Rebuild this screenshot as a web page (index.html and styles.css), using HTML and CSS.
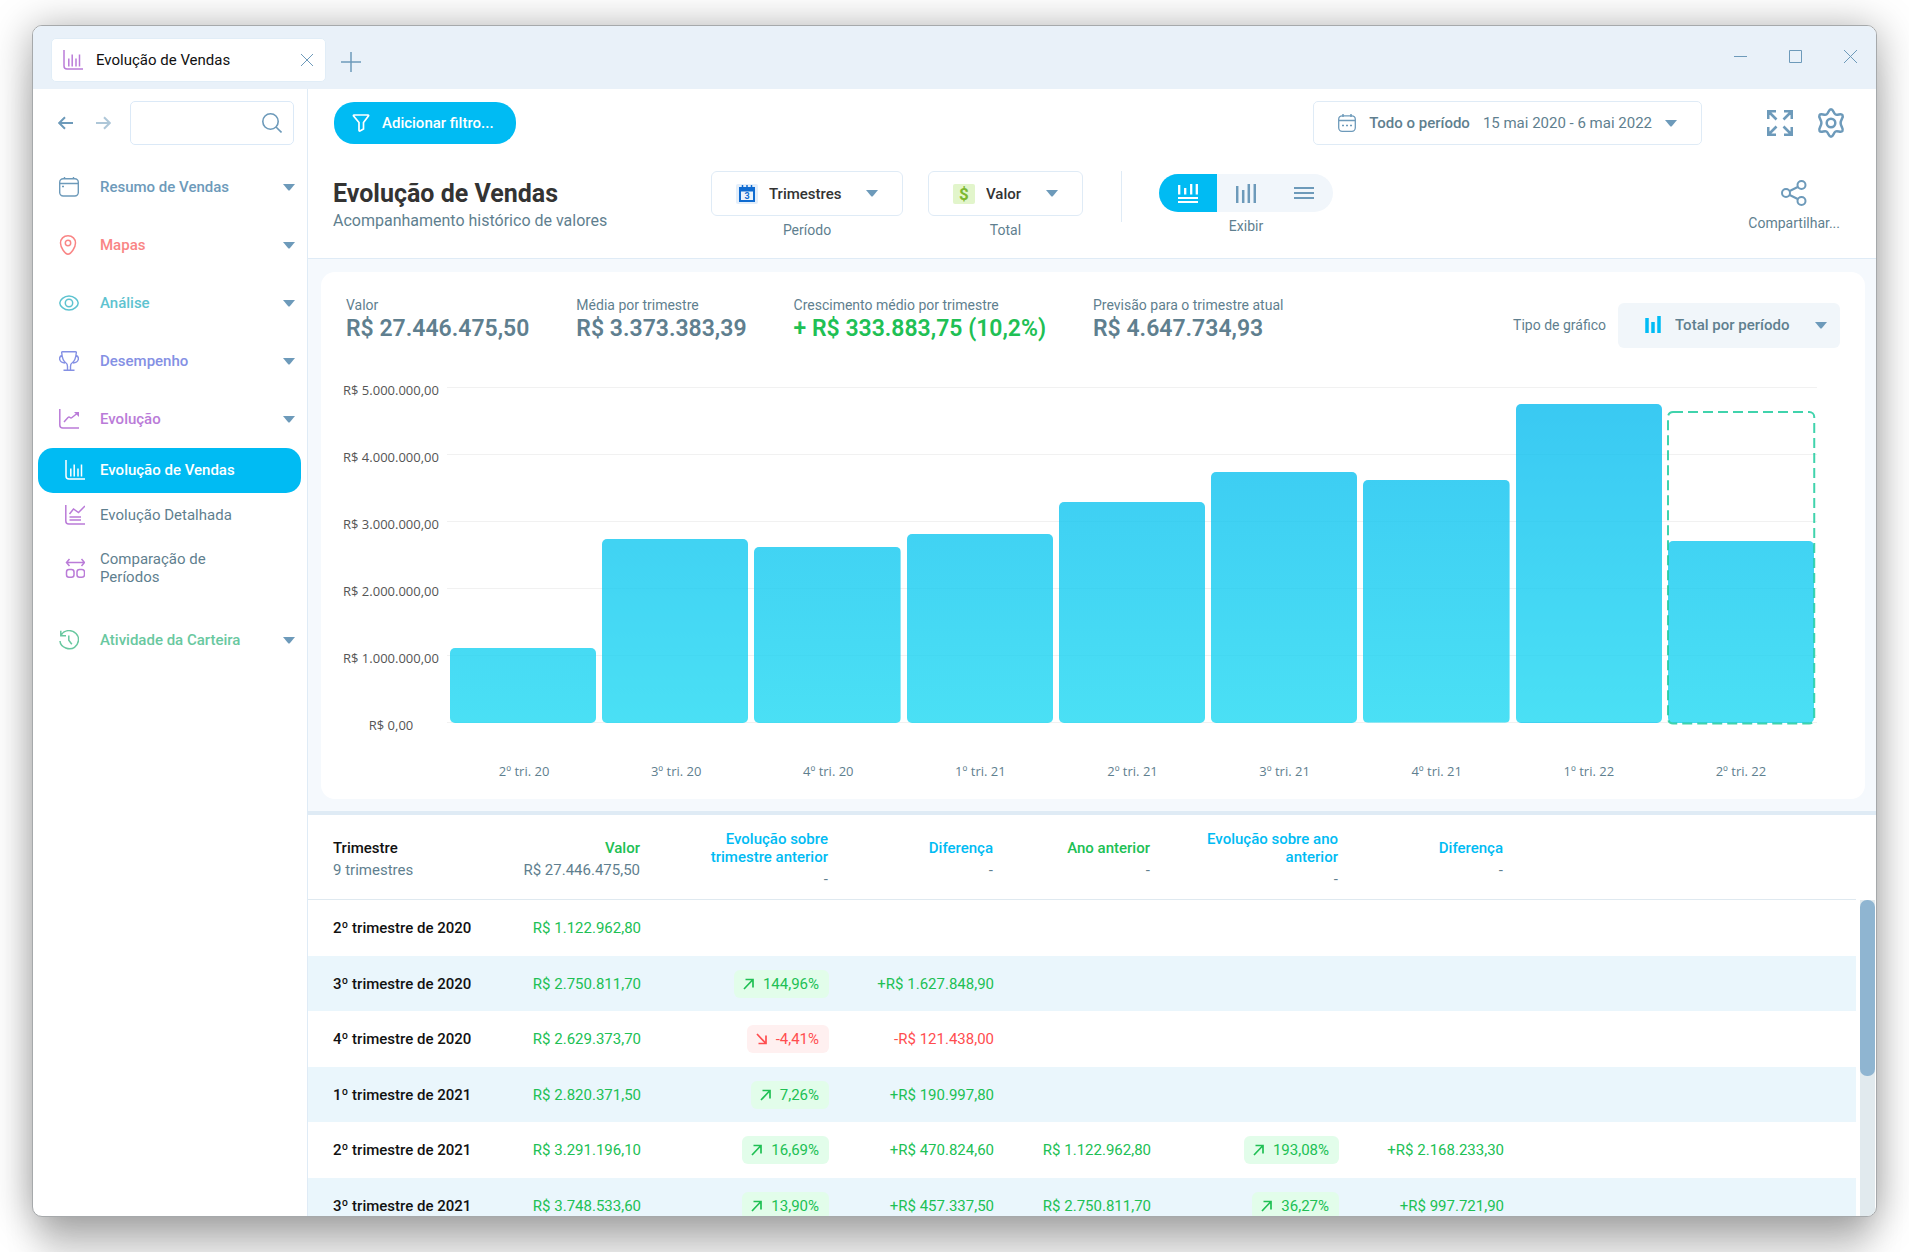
FILE: index.html
```html
<!DOCTYPE html>
<html lang="pt-BR">
<head>
<meta charset="utf-8">
<title>Evolução de Vendas</title>
<link rel="stylesheet" href="styles.css">
</head>
<body>
<svg class="symbols" aria-hidden="true">
  <symbol id="caret" viewBox="0 0 12 7"><path d="M0 0h12L7 6q-1 1-2 0z" fill="currentColor"/></symbol>
  <symbol id="bars" viewBox="0 0 20 20"><path d="M1 0v16q0 3 3 3h16" stroke-width="1.5"/><path d="M5.8 8.5v8M9.2 4.5v12M13 8.5v8M16.5 4.5v12" stroke-width="1.5"/></symbol>
  <symbol id="up" viewBox="0 0 11 12"><path d="M1 11l8.500-9M2.500 1.500h7.500v8" stroke-width="1.700"/></symbol>
  <symbol id="down" viewBox="0 0 11 12"><path d="M1 1l8.500 9M2.500 10.500h7.500v-8" stroke-width="1.700"/></symbol>
</svg>
<div class="window">
  <header class="titlebar">
    <div class="tab">
      <svg class="icon purple"><use href="#bars"/></svg>
      <span class="tab-title">Evolução de Vendas</span>
      <button class="plain" aria-label="Fechar aba"><svg class="icon-s" viewBox="0 0 12 12"><path d="M0 0l12 12M12 0L0 12" stroke-width="1"/></svg></button>
    </div>
    <button class="plain new-tab" aria-label="Nova aba"><svg class="icon" viewBox="0 0 20 20"><path d="M10 0v20M0 10h20" stroke-width="1.500"/></svg></button>
    <div class="controls">
      <button class="plain" aria-label="Minimizar"><svg class="icon-c" viewBox="0 0 13 13"><path d="M0 6.500h13" stroke-width="1"/></svg></button>
      <button class="plain" aria-label="Maximizar"><svg class="icon-c" viewBox="0 0 13 13"><path d="M.5.5h12v12h-12z" stroke-width="1"/></svg></button>
      <button class="plain" aria-label="Fechar"><svg class="icon-c" viewBox="0 0 13 13"><path d="M0 0l13 13M13 0L0 13" stroke-width="1"/></svg></button>
    </div>
  </header>
  <div class="body">
    <aside class="sidebar">
      <div class="tools">
        <button class="plain" aria-label="Voltar"><svg class="icon-a" viewBox="0 0 15 14"><path d="M15 7H1.500M7 1.200L1.200 7 7 12.800" stroke-width="2"/></svg></button>
        <button class="plain faded" aria-label="Avançar"><svg class="icon-a" viewBox="0 0 15 14"><path d="M0 7h13.500M8 1.200L13.800 7 8 12.800" stroke-width="2"/></svg></button>
        <label class="search">
          <input type="search" aria-label="Pesquisar">
          <svg class="icon" viewBox="0 0 20 20"><circle cx="8.500" cy="8.500" r="7.700" stroke-width="1.600"/><path d="M14 14l5.500 5.500" stroke-width="1.600"/></svg>
        </label>
      </div>
      <nav class="nav">
        <button class="group blue"><svg class="icon" viewBox="0 0 20 20"><rect x=".7" y="1.700" width="18.600" height="17.300" rx="3.500" stroke-width="1.400"/><path d="M1 6.500h18M5.500 0v2M14.500 0v2M3 9.500h2" stroke-width="1.400"/></svg><span>Resumo de Vendas</span><svg class="caret"><use href="#caret"/></svg></button>
        <button class="group red"><svg class="icon" viewBox="0 0 20 20"><path d="M9 .8c-4.500 0-7.500 3.200-7.500 7.200C1.500 12.500 6 19.200 9 19.200S16.500 12.500 16.500 8C16.500 4 13.500.8 9 .8z" stroke-width="1.500"/><circle cx="9" cy="8" r="2.700" stroke-width="1.500"/></svg><span>Mapas</span><svg class="caret"><use href="#caret"/></svg></button>
        <button class="group teal"><svg class="icon" viewBox="0 0 20 20"><path d="M.8 10C.8 7 5 3 10 3s9.200 4 9.200 7-4.200 7-9.200 7S.8 13 .8 10z" stroke-width="1.500"/><circle cx="10" cy="10" r="3.700" stroke-width="1.500"/></svg><span>Análise</span><svg class="caret"><use href="#caret"/></svg></button>
        <button class="group violet"><svg class="icon" viewBox="0 0 20 20"><path d="M3.500.8h13q1 0 .8 1c-.4 5-1.500 8.500-4.300 10.200-1.300.8-1.500 2-1.500 3.500v3M3.500.8q-1 0-.8 1c.4 5 1.500 8.500 4.300 10.200 1.300.8 1.500 2 1.500 3.500v3M2.800 4.500C-.6 6-.3 11.500 6 12M17.200 4.500C20.600 6 20.300 11.500 14 12M4.500 19.200h11" stroke-width="1.400"/></svg><span>Desempenho</span><svg class="caret"><use href="#caret"/></svg></button>
        <button class="group purple" aria-expanded="true"><svg class="icon" viewBox="0 0 20 20"><path d="M.8 0v16q0 3 3 3H20M5 13l4-4.500q1-.8 2 0t2 0L18 4.500" stroke-width="1.500"/><path d="M15 3h5v5z" fill="currentColor" stroke="none"/></svg><span>Evolução</span><svg class="caret"><use href="#caret"/></svg></button>
        <a class="item active" href="#vendas" aria-current="page"><svg class="icon"><use href="#bars"/></svg><span>Evolução de Vendas</span></a>
        <a class="item" href="#detalhada"><svg class="icon purple" viewBox="0 0 20 20"><path d="M.8 0v16q0 3 3 3H20M4.500 9l4-5 5 3.500L20 1M4.500 12H16M4.500 15H16" stroke-width="1.500"/></svg><span>Evolução Detalhada</span></a>
        <a class="item tall" href="#comparacao"><svg class="icon purple" viewBox="0 0 20 20"><rect x="1.500" y="11.500" width="7.500" height="7.700" rx="2.500" stroke-width="1.500"/><rect x="12" y="11.500" width="7.500" height="7.700" rx="2.500" stroke-width="1.500"/><path d="M2 4.500h17M4.500 1L1.500 4.500l3 3.500M16.500 1l3 3.500-3 3.500" stroke-width="1.500"/></svg><span>Comparação de Períodos</span></a>
        <button class="group green"><svg class="icon" viewBox="0 0 20 20"><path d="M2.500 4.500C6-.5 13-.5 17 3.500s3 10.500-1.500 13.800S1.500 18 1 11M1.800.8v5H7M9.800 5.500v4.800l3 4" stroke-width="1.500"/></svg><span>Atividade da Carteira</span><svg class="caret"><use href="#caret"/></svg></button>
      </nav>
    </aside>
    <main class="main">
      <div class="topbar">
        <button class="filter"><svg class="icon-f" viewBox="0 0 17 18"><path d="M1.500 1h14q1 0 .4 1L11 8.500v6.500L7.500 17q-1 .3-1-.8V8.500L1.100 2Q.6 1 1.500 1z" stroke-width="1.700"/></svg>Adicionar filtro...</button>
        <button class="period"><svg class="icon-f" viewBox="0 0 18 18"><rect x=".7" y="1.800" width="16.600" height="15.500" rx="3.500" stroke-width="1.300"/><path d="M1 6.500h16M5 0v3M13 0v3M4 11.500h2M8 11.500h2M12 11.500h2" stroke-width="1.500"/></svg><strong>Todo o período</strong><span>15 mai 2020 - 6 mai 2022</span><svg class="caret"><use href="#caret"/></svg></button>
        <button class="plain" aria-label="Tela cheia"><svg class="icon-l" viewBox="0 0 26 26"><path d="M1.200 9V1.200H9M17 1.200h7.800V9M24.800 17v7.800H17M9 24.800H1.200V17M2 2l7.500 7.500M24 2l-7.500 7.500M24 24l-7.500-7.500M2 24l7.500-7.500" stroke-width="2.600"/></svg></button>
        <button class="plain gear" aria-label="Configurações"><svg class="icon-g" viewBox="0 0 28 30"><path d="M14 1.300c2.500 0 2.300 4 4.500 5.200s5.600-1.800 7 .6-1.900 4.300-1.900 7.900 3.200 5.600 1.900 7.900-4.800-.6-7 .6-2 5.200-4.500 5.200-2.300-4-4.500-5.200-5.600 1.800-7-.6 1.900-4.300 1.900-7.900-3.200-5.600-1.900-7.900 4.800.6 7-.6 2-5.200 4.500-5.200z" stroke-width="2.500"/><circle cx="14" cy="15" r="4.300" stroke-width="2.500"/></svg></button>
      </div>
      <div class="heading">
        <div class="titles">
          <h1>Evolução de Vendas</h1>
          <p>Acompanhamento histórico de valores</p>
        </div>
        <div class="option">
          <div class="field wide">
            <svg class="icon-p" viewBox="0 0 22 20"><rect width="22" height="20" rx="2" fill="#e3eefa" stroke="none"/><path d="M3 3h16v15H3z" fill="#0f6bd0" stroke="none"/><path d="M5 7.500h12V16H5z" fill="#eaf3fc" stroke="none"/><path d="M6.500 1v3.500M11 1v3.500M15.500 1v3.500" stroke="#0f6bd0" stroke-width="1.500"/><text x="11" y="15" class="day">3</text></svg>
            <select id="periodo"><option>Trimestres</option><option>Meses</option></select>
            <svg class="caret"><use href="#caret"/></svg>
          </div>
          <label for="periodo">Período</label>
        </div>
        <div class="option">
          <div class="field">
            <svg class="icon-p" viewBox="0 0 22 20"><rect width="22" height="20" rx="2" fill="#e2f5cb" stroke="none"/><text x="11" y="16" class="money">$</text></svg>
            <select id="total"><option>Valor</option></select>
            <svg class="caret"><use href="#caret"/></svg>
          </div>
          <label for="total">Total</label>
        </div>
        <div class="option view">
          <div class="segments">
            <button class="on" aria-pressed="true" aria-label="Gráfico e tabela"><svg class="icon" viewBox="0 0 20 20"><path d="M1.200 2v9.500M7.200 5v6.500M13.200 1v10.500M18.800 1v10.500" stroke-width="2.300"/><path d="M0 15h20M0 19h20" stroke-width="1.900"/></svg></button>
            <button aria-label="Gráfico"><svg class="icon" viewBox="0 0 20 20"><path d="M1.200 3v17M7.200 7v13M12.800 1v19M18.800 1v19" stroke-width="2.500"/></svg></button>
            <button aria-label="Tabela"><svg class="icon" viewBox="0 0 20 20"><path d="M0 5h20M0 10h20M0 15h20" stroke-width="2"/></svg></button>
          </div>
          <span>Exibir</span>
        </div>
        <button class="share"><svg class="icon-l" viewBox="0 0 26 26"><circle cx="5" cy="13" r="4" stroke-width="2"/><circle cx="20.500" cy="5" r="4" stroke-width="2"/><circle cx="20.500" cy="21" r="4" stroke-width="2"/><path d="M8.700 11l8-4M8.700 15l8 4" stroke-width="2"/></svg>Compartilhar...</button>
      </div>
      <section class="stage">
        <div class="panel">
          <div class="summary">
            <dl>
              <div><dt>Valor</dt><dd>R$ 27.446.475,50</dd></div>
              <div><dt>Média por trimestre</dt><dd>R$ 3.373.383,39</dd></div>
              <div><dt>Crescimento médio por trimestre</dt><dd class="gain">+ R$ 333.883,75 (10,2%)</dd></div>
              <div><dt>Previsão para o trimestre atual</dt><dd>R$ 4.647.734,93</dd></div>
            </dl>
            <label for="tipo">Tipo de gráfico</label>
            <div class="field soft">
              <svg class="icon-f" viewBox="0 0 18 18"><path d="M3 2v15M9 6v11M15 0v17" stroke="#00bcf5" stroke-width="3.500"/></svg>
              <select id="tipo"><option>Total por período</option></select>
              <svg class="caret"><use href="#caret"/></svg>
            </div>
          </div>
          <div class="chart">
            <div class="scale"><span>R$ 5.000.000,00</span><span>R$ 4.000.000,00</span><span>R$ 3.000.000,00</span><span>R$ 2.000.000,00</span><span>R$ 1.000.000,00</span><span>R$ 0,00</span></div>
            <div class="plot">
              <div class="cols">
                <i class="bar" style="height:22.4%"></i>
                <i class="bar" style="height:54.9%"></i>
                <i class="bar" style="height:52.5%"></i>
                <i class="bar" style="height:56.3%"></i>
                <i class="bar" style="height:65.8%"></i>
                <i class="bar" style="height:74.7%"></i>
                <i class="bar" style="height:72.2%"></i>
                <i class="bar" style="height:94.8%"></i>
                <div class="current"><i class="bar" style="height:54.1%"></i><svg class="forecast" style="height:92.7%"><rect width="100%" height="100%" rx="5"/></svg></div>
              </div>
            </div>
            <div class="quarters"><span>2º tri. 20</span><span>3º tri. 20</span><span>4º tri. 20</span><span>1º tri. 21</span><span>2º tri. 21</span><span>3º tri. 21</span><span>4º tri. 21</span><span>1º tri. 22</span><span>2º tri. 22</span></div>
          </div>
        </div>
      </section>
      <section class="data">
        <table>
          <colgroup><col class="c-name"><col class="c-value"><col class="c-evo"><col class="c-diff"><col class="c-prev"><col class="c-evo"><col class="c-diff"><col></colgroup>
          <thead><tr>
            <th class="dark">Trimestre<small>9 trimestres</small></th>
            <th class="gain">Valor<small>R$ 27.446.475,50</small></th>
            <th>Evolução sobre trimestre anterior<small>-</small></th>
            <th>Diferença<small>-</small></th>
            <th class="gain">Ano anterior<small>-</small></th>
            <th>Evolução sobre ano anterior<small>-</small></th>
            <th>Diferença<small>-</small></th>
            <th></th>
          </tr></thead>
          <tbody>
            <tr><td>2º trimestre de 2020</td><td>R$ 1.122.962,80</td><td></td><td></td><td></td><td></td><td></td><td></td></tr>
            <tr><td>3º trimestre de 2020</td><td>R$ 2.750.811,70</td><td><span class="badge"><svg class="icon-b"><use href="#up"/></svg>144,96%</span></td><td>+R$ 1.627.848,90</td><td></td><td></td><td></td><td></td></tr>
            <tr><td>4º trimestre de 2020</td><td>R$ 2.629.373,70</td><td><span class="badge loss"><svg class="icon-b"><use href="#down"/></svg>-4,41%</span></td><td class="loss">-R$ 121.438,00</td><td></td><td></td><td></td><td></td></tr>
            <tr><td>1º trimestre de 2021</td><td>R$ 2.820.371,50</td><td><span class="badge"><svg class="icon-b"><use href="#up"/></svg>7,26%</span></td><td>+R$ 190.997,80</td><td></td><td></td><td></td><td></td></tr>
            <tr><td>2º trimestre de 2021</td><td>R$ 3.291.196,10</td><td><span class="badge"><svg class="icon-b"><use href="#up"/></svg>16,69%</span></td><td>+R$ 470.824,60</td><td>R$ 1.122.962,80</td><td><span class="badge"><svg class="icon-b"><use href="#up"/></svg>193,08%</span></td><td>+R$ 2.168.233,30</td><td></td></tr>
            <tr><td>3º trimestre de 2021</td><td>R$ 3.748.533,60</td><td><span class="badge"><svg class="icon-b"><use href="#up"/></svg>13,90%</span></td><td>+R$ 457.337,50</td><td>R$ 2.750.811,70</td><td><span class="badge"><svg class="icon-b"><use href="#up"/></svg>36,27%</span></td><td>+R$ 997.721,90</td><td></td></tr>
          </tbody>
        </table>
        <div class="track"><div class="thumb"></div></div>
      </section>
    </main>
  </div>
</div>
</body>
</html>
```

FILE: styles.css
```css
* { box-sizing: border-box; }
html, body { height: 100%; }
body {
  margin: 0;
  padding: 25px 32px 35px;
  overflow: hidden;
  background: #fff;
  color: #5f7f8f;
  font: 15px/18px Roboto, "Liberation Sans", sans-serif;
}
button, select, input { font: inherit; color: inherit; }
button { padding: 0; border: 0; background: none; cursor: pointer; }
svg { display: block; flex: none; fill: none; stroke: currentColor; }
.symbols { position: absolute; width: 0; height: 0; }
.plain { color: #6d9aba; }

.icon { width: 20px; height: 20px; }
.icon-s { width: 12px; height: 12px; }
.icon-c { width: 13px; height: 13px; }
.icon-a { width: 15px; height: 14px; }
.icon-b { width: 11px; height: 12px; }
.icon-f { width: 18px; height: 18px; }
.icon-p { width: 22px; height: 20px; }
.icon-l { width: 26px; height: 26px; }
.icon-g { width: 28px; height: 30px; }
.caret { width: 12px; height: 7px; color: #6d9aba; stroke: none; }

.blue { color: #6d9aba; }
.red { color: #f98585; }
.teal { color: #5ec3d0; }
.violet { color: #8490e4; }
.purple { color: #ba7bd8; }
.green { color: #69c8a0; }

.window {
  display: flex;
  flex-direction: column;
  height: 100%;
  overflow: hidden;
  border: 1px solid #a6a9ab;
  border-radius: 10px;
  background: #fff;
  box-shadow: 0 4px 40px rgba(0, 0, 0, .36), 0 48px 36px -8px rgba(0, 0, 0, .16);
}
.titlebar { display: flex; align-items: center; flex: none; height: 63px; padding: 0 19px 0 18px; background: #e9f1f9; }
.tab {
  display: flex;
  align-items: center;
  width: 275px;
  height: 44px;
  margin-top: 5px;
  padding: 0 12px 0 11px;
  border: 1px solid #e1edf7;
  border-radius: 5px;
  background: #fff;
  color: #111;
}
.tab-title { flex: 1; margin-left: 13px; }
.new-tab { margin: 8px 0 0 15px; }
.controls { display: flex; gap: 42px; margin: 0 0 2px auto; }

.body { display: flex; flex: 1; min-height: 0; }
.sidebar { flex: none; width: 275px; border-right: 1px solid #dfebf6; }
.tools { display: flex; align-items: center; gap: 23px; height: 68px; margin-bottom: 1px; padding: 0 13px 0 25px; }
.faded { opacity: .55; }
.search {
  display: flex;
  align-items: center;
  flex: 1;
  min-width: 0;
  height: 44px;
  margin-left: -4px;
  padding: 0 11px;
  border: 1px solid #dbe9f7;
  border-radius: 5px;
  color: #6d9aba;
}
.search input { flex: 1; min-width: 0; border: 0; outline: 0; background: none; }
.nav { display: flex; flex-direction: column; }
.group {
  display: flex;
  align-items: center;
  height: 58px;
  padding: 0 12px 0 26px;
  font-weight: 500;
  text-align: left;
}
.group span { flex: 1; margin-left: 21px; }
.item {
  display: flex;
  align-items: center;
  gap: 15px;
  height: 45px;
  margin: 0 6px 0 5px;
  padding: 0 27px 2px;
  border-radius: 15px;
  color: #5f7f8f;
  text-decoration: none;
}
.item.active { background: #00bbf3; color: #fff; font-weight: 500; }
.item.tall { height: 59px; margin-bottom: 14px; padding: 0 60px 0 27px; }

.main { display: flex; flex-direction: column; flex: 1; min-width: 0; }
.topbar { display: flex; align-items: center; flex: none; height: 68px; padding: 0 31px 0 26px; }
.filter {
  display: flex;
  align-items: center;
  gap: 12px;
  height: 42px;
  padding: 0 22px 0 18px;
  border-radius: 20px;
  background: #00bbf3;
  color: #fff;
  font-weight: 500;
}
.period {
  display: flex;
  align-items: center;
  gap: 13px;
  height: 44px;
  margin: 0 65px 0 auto;
  padding: 0 24px;
  border: 1px solid #dfebf6;
  border-radius: 5px;
}
.period .icon-f { color: #6d9aba; }
strong { font-weight: 500; }
.gear { margin-left: 24px; }

.heading {
  display: flex;
  flex: none;
  height: 102px;
  padding: 14px 31px 0 25px;
  border-bottom: 1px solid #dfebf6;
}
.titles { width: 378px; padding-top: 8px; }
h1 { margin: 0; color: #333; font-size: 25px; line-height: 30px; font-weight: 700; }
.titles p { margin: 2px 0 0; font-size: 16px; line-height: 20px; }
.option { display: flex; flex-direction: column; align-items: center; gap: 5px; margin-right: 25px; font-size: 14px; }
.field {
  display: flex;
  align-items: center;
  width: 155px;
  height: 45px;
  padding: 0 24px;
  border: 1px solid #dfebf6;
  border-radius: 6px;
  color: #333;
  font-size: 15px;
  font-weight: 500;
}
.field.wide { width: 192px; }
.field select {
  flex: 1;
  min-width: 0;
  margin-left: 11px;
  padding: 0;
  border: 0;
  outline: 0;
  background: none;
  appearance: none;
}
.day, .money { stroke: none; font-weight: 700; text-anchor: middle; }
.day { fill: #0f6bd0; font-size: 9px; }
.money { fill: #7cb82f; font-size: 17px; }
.view { height: 51px; margin: 0 0 0 13px; padding: 3px 0 0 37px; border-left: 1px solid #dfebf6; }
.segments { display: flex; flex: none; border-radius: 19px; overflow: hidden; background: #f1f6fb; }
.segments button { display: grid; place-items: center; width: 58px; height: 38px; color: #6d9aba; }
.segments .on { background: #00bbf3; color: #fff; }
.share { display: flex; flex-direction: column; align-items: center; gap: 8px; align-self: flex-start; margin-left: auto; padding: 9px 5px 0 0; font-size: 14px; }
.share svg { color: #6d9aba; }

.stage { flex: none; padding: 13px 11px 12px 13px; border-bottom: 4px solid #dfebf5; background: #f5f9fd; }
.panel { height: 527px; border-radius: 14px; background: #fff; }
.summary { display: flex; align-items: center; height: 106px; padding: 0 25px; font-size: 14px; }
.summary dl { display: flex; gap: 47px; margin: 0 auto 16px 0; }
.summary dt { padding-top: 4px; }
.summary dd { margin: 2px 0 0; font-size: 23px; line-height: 26px; font-weight: 600; }
.summary .gain { color: #20c054; }
.field.soft { width: 222px; margin-left: 12px; padding: 0 13px 0 26px; border: 0; background: #f1f6fa; color: #5f7f8f; }
.field.soft select { margin-left: 13px; }

.chart {
  display: grid;
  grid-template: 336px auto / 104px 1fr;
  gap: 39px 0;
  margin: 9px 48px 0 22px;
  font: 13px/18px "Open Sans", "Noto Sans", sans-serif;
}
.scale { display: flex; flex-direction: column; justify-content: space-between; align-items: center; margin: -6px 8px -11px 0; color: #555; }
.plot {
  padding-left: 3px;
  background: repeating-linear-gradient(#f1f1f1 0 1px, transparent 1px 67px);
}
.cols { display: grid; grid-template-columns: repeat(9, 1fr); gap: 6px; align-items: end; height: 336px; padding-right: 3px; }
.bar {
  display: block;
  border-radius: 5px;
  background: linear-gradient(rgba(7, 186, 239, .8), rgba(29, 216, 242, .8)) bottom / 100% 336px;
}
.current { position: relative; display: flex; flex-direction: column; justify-content: flex-end; height: 100%; }
.forecast { position: absolute; bottom: 0; left: 0; width: 100%; overflow: visible; stroke: #1fcb9e; stroke-opacity: .85; stroke-width: 2px; stroke-dasharray: 10 5; }
.quarters { grid-column: 2; display: grid; grid-template-columns: repeat(9, 1fr); padding-left: 1px; text-align: center; }

.data { display: flex; flex: 1; gap: 4px; min-height: 0; padding-right: 1px; overflow: hidden; }
table { flex: 1; align-self: flex-start; table-layout: fixed; width: 100%; border-spacing: 0; }
.c-name { width: 192px; }
.c-value { width: 150px; }
.c-evo { width: 188px; }
.c-diff { width: 165px; }
.c-prev { width: 157px; }
th { height: 85px; padding: 3px 10px 0 16px; border-bottom: 1px solid #dfe9f0; color: #00bbf3; font-weight: 500; text-align: right; }
th small { display: block; margin-top: 4px; color: #5f7f8f; font-size: 15px; font-weight: 400; }
.gain { color: #20c054; }
td { height: 56px; padding: 0 9px 0 0; color: #20c054; text-align: right; }
tbody tr:nth-child(even) { background: #eaf6fc; }
tbody tr:nth-child(even) td { height: 55px; }
th:first-child, td:first-child { padding-left: 25px; padding-right: 0; text-align: left; }
td:first-child { color: #111; font-weight: 500; }
th.dark { color: #111; }
.badge { display: inline-flex; align-items: center; gap: 9px; height: 28px; padding: 0 10px 0 9px; border-radius: 6px; background: #e2fdea; vertical-align: middle; }
td.loss, .badge.loss { color: #ff4d4f; }
.badge.loss { background: #fff0f0; }
.track { flex: none; width: 15px; margin-top: 85px; background: #e1eaee; }
.thumb { height: 176px; border-radius: 7px; background: #8fb5d1; }
```
